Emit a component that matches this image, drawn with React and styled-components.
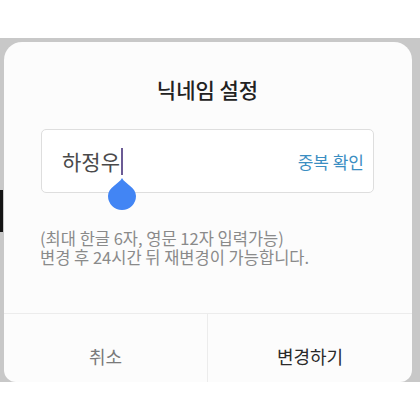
import styled, { createGlobalStyle } from "styled-components"

const Global = createGlobalStyle`
  html, body {
    margin: 0;
    padding: 0;
    background: #ffffff;
  }
  #root {
    width: 420px;
    height: 420px;
    overflow: hidden;
    font-family: "Noto Sans CJK KR", "Noto Sans", sans-serif;
  }
`

const Page = styled.div`
  display: flex;
  flex-direction: column;
  height: 420px;
  background: #ffffff;
`

const TopBand = styled.div`
  height: 38px;
  flex: none;
`

const Backdrop = styled.div`
  height: 344px;
  display: flex;
  flex-direction: column;
  padding: 4px 8px 0 4px;
  box-sizing: border-box;
  background-color: #c8c8c8;
  background-image: linear-gradient(#151515, #151515);
  background-size: 3px 42px;
  background-position: 0 152px;
  background-repeat: no-repeat;
`

const Card = styled.div`
  flex: 1;
  display: flex;
  flex-direction: column;
  background: #fcfcfc;
  border-radius: 18px 18px 12px 12px;
  overflow: hidden;
`

const Body = styled.div`
  flex: 1;
  display: flex;
  flex-direction: column;
  padding: 32px 38px 0 37px;
`

const Title = styled.h2`
  margin: 0;
  height: 30px;
  line-height: 30px;
  text-align: center;
  font-size: 21px;
  font-weight: 500;
  color: #222;
`

const Field = styled.div`
  margin-top: 25px;
  height: 64px;
  box-sizing: border-box;
  border: 1px solid #dedede;
  border-radius: 5px;
  background: #fff;
  display: flex;
  align-items: center;
  justify-content: space-between;
  padding: 0 9px 0 20px;
`

const Value = styled.div`
  display: flex;
  align-items: center;
  font-size: 21px;
  color: #4a4a4a;
`

const Caret = styled.span`
  position: relative;
  display: inline-block;
  width: 2px;
  height: 27px;
  margin-left: 1px;
  background: #6b5b95;
`

const Handle = styled.svg`
  position: absolute;
  left: -13px;
  top: 30px;
`

const CheckButton = styled.button`
  border: 0;
  background: none;
  padding: 0;
  font-family: inherit;
  font-size: 17px;
  color: #3b8ec2;
`

const Help = styled.p`
  margin: 36px 0 0 -1px;
  font-size: 16.5px;
  line-height: 19px;
  color: #8a8a8a;
`

const Footer = styled.div`
  height: 68px;
  flex: none;
  display: grid;
  grid-template-columns: 203px 1fr;
  border-top: 1px solid #ececec;
`

const Action = styled.button`
  border: 0;
  background: none;
  padding: 16px 0 0;
  height: 100%;
  box-sizing: border-box;
  font-family: inherit;
  font-size: 18px;
  font-weight: 400;
  line-height: 24px;
  color: ${(p) => (p.$primary ? "#2a2a2a" : "#7a7a7a")};
  border-left: ${(p) => (p.$primary ? "1px solid #ececec" : "0")};
`

export default function App() {
  return (
    <>
      <Global />
      <Page>
        <TopBand />
        <Backdrop>
          <Card>
            <Body>
              <Title>닉네임 설정</Title>
              <Field>
                <Value>
                  하정우
                  <Caret>
                    <Handle width="28" height="32" viewBox="0 0 28 32">
                      <path
                        d="M14 0 C17 6 28 9 28 18 A14 14 0 0 1 0 18 C0 9 11 6 14 0 Z"
                        fill="#4285f4"
                      />
                    </Handle>
                  </Caret>
                </Value>
                <CheckButton>중복 확인</CheckButton>
              </Field>
              <Help>
                (최대 한글 6자, 영문 12자 입력가능)
                <br />
                변경 후 24시간 뒤 재변경이 가능합니다.
              </Help>
            </Body>
            <Footer>
              <Action>취소</Action>
              <Action $primary>변경하기</Action>
            </Footer>
          </Card>
        </Backdrop>
      </Page>
    </>
  )
}
